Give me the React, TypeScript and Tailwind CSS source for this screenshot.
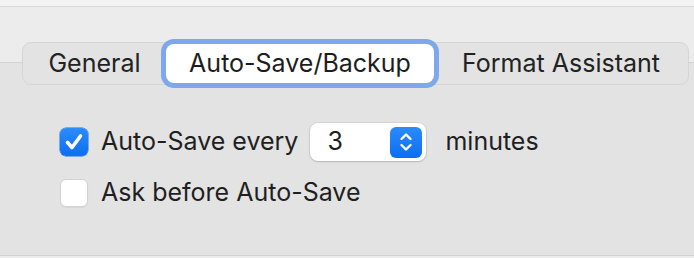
const font = { fontFamily: "Inter, 'Noto Sans', sans-serif" };

function Checkbox({ checked }: { checked: boolean }) {
  if (checked) {
    return (
      <div className="w-[28px] h-[28px] shrink-0 rounded-[6px] bg-gradient-to-b from-[#2b8cfb] to-[#0b6ef1] flex items-center justify-center shadow-[0_0_0_0.5px_#1b6fe0]">
        <svg width="28" height="28" viewBox="0 0 28 28">
          <path d="M7.5 14.5 L12 19.5 L20.5 8" fill="none" stroke="white" strokeWidth="3.6" strokeLinecap="round" strokeLinejoin="round" />
        </svg>
      </div>
    );
  }
  return <div className="w-[28px] h-[28px] shrink-0 rounded-[6px] bg-white border border-[#d3d3d3] shadow-[0_1px_1px_rgba(0,0,0,0.06)]" />;
}

function Stepper() {
  return (
    <div className="w-[116px] h-[38px] rounded-[8px] bg-white shadow-[0_0_0_1px_rgba(0,0,0,0.06),0_1px_2px_rgba(0,0,0,0.15)] flex items-center pl-[17px] pr-[4px]">
      <span className="flex-1 text-[25px] text-[#1d1d1d]">3</span>
      <div className="w-[32px] h-[31px] rounded-[6px] bg-gradient-to-b from-[#2a8bfb] to-[#0b6ef1] flex items-center justify-center">
        <svg width="16" height="22" viewBox="0 0 16 22">
          <path d="M3.5 8 L8 3.5 L12.5 8" fill="none" stroke="white" strokeWidth="2.4" strokeLinecap="round" strokeLinejoin="round" />
          <path d="M3.5 14 L8 18.5 L12.5 14" fill="none" stroke="white" strokeWidth="2.4" strokeLinecap="round" strokeLinejoin="round" />
        </svg>
      </div>
    </div>
  );
}

export default function App() {
  return (
    <div className="w-[694px] h-[258px] bg-[#ececec] flex flex-col overflow-hidden" style={font}>
      <div className="h-[7px] bg-[#f3f3f3] border-b border-[#d9d9d9] shrink-0" />
      <div className="h-[55px] shrink-0" />
      <div className="h-[194px] bg-[#e3e3e3] border-t border-b border-[#d3d3d3] flex flex-col shrink-0">
        <div className="relative z-10 -mt-[21px] ml-[22px] w-[667px] h-[43px] rounded-[9px] bg-[#e3e3e3] border border-[#d5d5d5] flex items-center text-[25px] text-[#222]">
          <div className="w-[143px] h-full flex items-center justify-center">General</div>
          <div className="w-[268px] h-[39px] rounded-[8px] bg-white ring-[5px] ring-[#7ea7ec] shadow-[0_1px_2px_rgba(0,0,0,0.2)] flex items-center justify-center text-[#1d1d1d]">
            Auto-Save/Backup
          </div>
          <div className="flex-1 h-full flex items-center justify-center">Format Assistant</div>
        </div>
        <div className="flex flex-col pl-[60px] pt-[38px] gap-[18px] text-[25px] text-[#1f1f1f]">
          <div className="flex items-center h-[38px]">
            <Checkbox checked />
            <span className="ml-[13px] whitespace-nowrap">Auto-Save every</span>
            <div className="ml-[12px]">
              <Stepper />
            </div>
            <span className="ml-[19px]">minutes</span>
          </div>
          <div className="flex items-center h-[28px]">
            <Checkbox checked={false} />
            <span className="ml-[13px]">Ask before Auto-Save</span>
          </div>
        </div>
      </div>
    </div>
  );
}
